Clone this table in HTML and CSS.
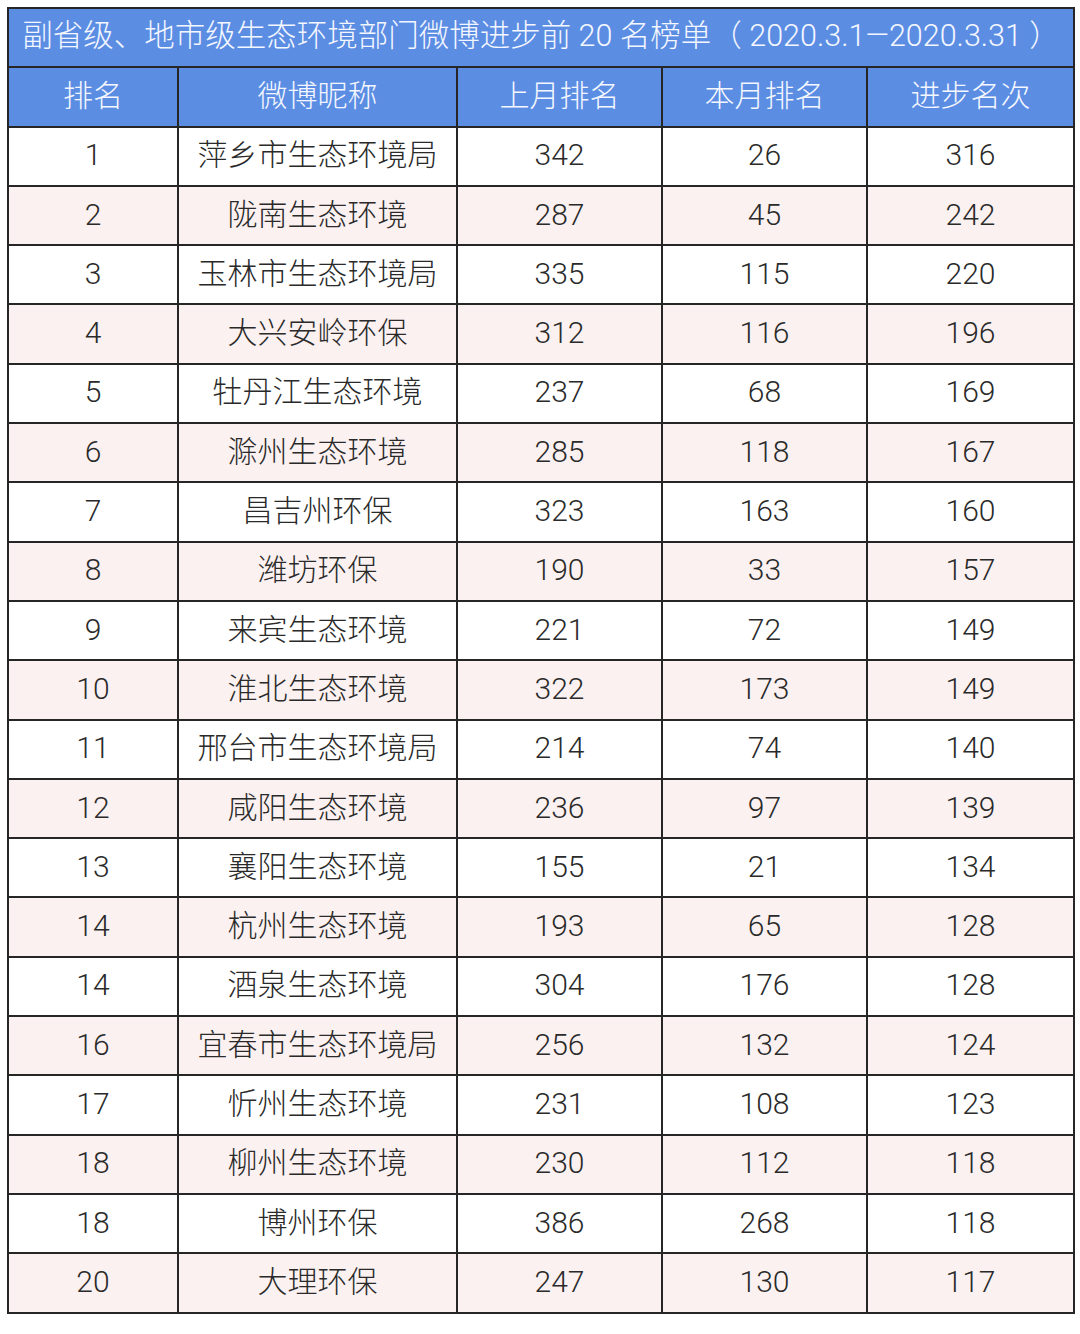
FILE: index.html
```html
<!DOCTYPE html>
<html lang="zh-CN">
<head>
<meta charset="utf-8">
<link rel="stylesheet" href="styles.css">
</head>
<body>
<div class="wrap">
<table class="rank">
<colgroup>
<col class="c1"><col class="c2"><col class="c3"><col class="c4"><col class="c5">
</colgroup>
<thead>
<tr class="title"><th colspan="5">副省级、地市级生态环境部门微博进步前 20 名榜单（ 2020.3.1—2020.3.31 ）</th></tr>
<tr class="head"><th>排名</th><th>微博昵称</th><th>上月排名</th><th>本月排名</th><th>进步名次</th></tr>
</thead>
<tbody>
<tr><td>1</td><td>萍乡市生态环境局</td><td>342</td><td>26</td><td>316</td></tr>
<tr><td>2</td><td>陇南生态环境</td><td>287</td><td>45</td><td>242</td></tr>
<tr><td>3</td><td>玉林市生态环境局</td><td>335</td><td>115</td><td>220</td></tr>
<tr><td>4</td><td>大兴安岭环保</td><td>312</td><td>116</td><td>196</td></tr>
<tr><td>5</td><td>牡丹江生态环境</td><td>237</td><td>68</td><td>169</td></tr>
<tr><td>6</td><td>滁州生态环境</td><td>285</td><td>118</td><td>167</td></tr>
<tr><td>7</td><td>昌吉州环保</td><td>323</td><td>163</td><td>160</td></tr>
<tr><td>8</td><td>潍坊环保</td><td>190</td><td>33</td><td>157</td></tr>
<tr><td>9</td><td>来宾生态环境</td><td>221</td><td>72</td><td>149</td></tr>
<tr><td>10</td><td>淮北生态环境</td><td>322</td><td>173</td><td>149</td></tr>
<tr><td>11</td><td>邢台市生态环境局</td><td>214</td><td>74</td><td>140</td></tr>
<tr><td>12</td><td>咸阳生态环境</td><td>236</td><td>97</td><td>139</td></tr>
<tr><td>13</td><td>襄阳生态环境</td><td>155</td><td>21</td><td>134</td></tr>
<tr><td>14</td><td>杭州生态环境</td><td>193</td><td>65</td><td>128</td></tr>
<tr><td>14</td><td>酒泉生态环境</td><td>304</td><td>176</td><td>128</td></tr>
<tr><td>16</td><td>宜春市生态环境局</td><td>256</td><td>132</td><td>124</td></tr>
<tr><td>17</td><td>忻州生态环境</td><td>231</td><td>108</td><td>123</td></tr>
<tr><td>18</td><td>柳州生态环境</td><td>230</td><td>112</td><td>118</td></tr>
<tr><td>18</td><td>博州环保</td><td>386</td><td>268</td><td>118</td></tr>
<tr><td>20</td><td>大理环保</td><td>247</td><td>130</td><td>117</td></tr>
</tbody>
</table>
</div>
</body>
</html>
```
FILE: styles.css
```css
html, body {
  margin: 0;
  padding: 0;
  background: #ffffff;
}
.wrap {
  padding: 7px 0 0 7px;
}
.rank {
  border-collapse: collapse;
  table-layout: fixed;
  width: 1066px;
  font-family: "Roboto", "Noto Sans CJK SC", sans-serif;
  font-weight: 300;
  color: #2a2a2a;
}
.c1 { width: 170px; }
.c2 { width: 279px; }
.c3 { width: 205px; }
.c4 { width: 205px; }
.c5 { width: 207px; }
.rank th, .rank td {
  border: 2px solid #262626;
  height: 59.3px;
  padding: 0 0 2px 0;
  box-sizing: border-box;
  text-align: center;
  vertical-align: middle;
  font-size: 30px;
  line-height: 1;
}
.rank th {
  background: #5b8de3;
  color: #f4f7ff;
  font-weight: 300;
}
.title th {
  font-size: 30.5px;
  white-space: nowrap;
}
.rank tbody tr:nth-child(even) td {
  background: #fcf1f1;
}
```
